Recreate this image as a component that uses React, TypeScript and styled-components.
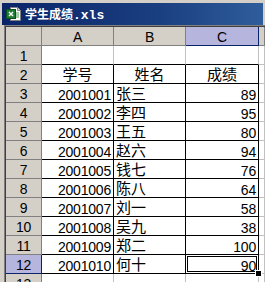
import React from "react";
import styled, { createGlobalStyle } from "styled-components";

const Global = createGlobalStyle`
  html, body { margin: 0; padding: 0; background: #d4d0c8; }
  #root { width: 265px; height: 282px; }
`;

const NAVY = "#0a246a";
const SELBG = "#b5b5de";
const HEADBG = "#d4d0c8";
const HEADLINE = "#808080";
const GRID = "#c0c0c0";

const Window = styled.div`
  width: 265px;
  height: 282px;
  overflow: hidden;
  background: #d4d0c8;
  display: flex;
  flex-direction: column;
`;

const TitleBar = styled.div`
  flex: none;
  margin: 3px 2px 0 2px;
  height: 22px;
  background: linear-gradient(to right, #0a246a 0%, #1a3f80 60%, #2f5d9b 100%);
  display: flex;
  align-items: center;
  gap: 3px;
  padding-left: 4px;
  color: #fff;
`;

const TitleHan = styled.span`
  font-family: "Noto Sans CJK SC", sans-serif;
  font-weight: 700;
  font-size: 12px;
  line-height: 14px;
`;

const TitleExt = styled.span`
  font-family: "Liberation Mono", monospace;
  font-weight: 700;
  font-size: 13px;
  line-height: 14px;
`;

const Frame = styled.div`
  flex: 1;
  margin-left: 4px;
  border-top: 1px solid #808080;
  border-left: 1px solid #808080;
  display: flex;
`;

const Sheet = styled.div`
  flex: 1;
  border-top: 1px solid #404040;
  border-left: 1px solid #404040;
  display: grid;
  grid-template-columns: 36px 72px 72px 73px 1fr;
  grid-auto-rows: 19px;
  background: #fff;
  align-content: start;
`;

const Head = styled.div<{ $sel?: boolean; $row?: boolean }>`
  box-sizing: border-box;
  background: ${(p) => (p.$sel ? SELBG : HEADBG)};
  border-right: 1px solid ${(p) => (p.$sel ? NAVY : HEADLINE)};
  border-bottom: 1px solid ${(p) => (p.$sel ? NAVY : HEADLINE)};
  display: flex;
  align-items: flex-end;
  justify-content: center;
  padding-bottom: 1px;
  overflow: hidden;
`;

const Cell = styled.div<{ $align?: "left" | "right" | "center"; $r?: string; $b?: string; $active?: boolean }>`
  position: relative;
  box-sizing: border-box;
  border-right: 1px solid ${(p) => p.$r || GRID};
  border-bottom: 1px solid ${(p) => p.$b || GRID};
  display: flex;
  align-items: flex-end;
  justify-content: ${(p) =>
    p.$align === "right" ? "flex-end" : p.$align === "center" ? "center" : "flex-start"};
  padding: 0 2px 0 2px;
  box-shadow: ${(p) => (p.$active ? "inset 0 0 0 1px #fff, inset 0 0 0 2px #000" : "none")};
`;

const Num = styled.span`
  font-family: "Liberation Sans", Arial, sans-serif;
  font-size: 14px;
  letter-spacing: -0.2px;
  line-height: 12px;
  padding-bottom: 1px;
  color: #000;
`;

const Han = styled.span`
  font-family: "Noto Sans CJK SC", sans-serif;
  font-size: 15px;
  line-height: 18px;
  color: #000;
`;

const Handle = styled.div`
  position: absolute;
  right: -3px;
  bottom: -3px;
  width: 5px;
  height: 5px;
  background: #000;
  box-shadow: 0 0 0 1px #fff;
  z-index: 2;
`;

const ExcelIcon = () => (
  <svg width="16" height="16" viewBox="0 0 16 16">
    <path d="M4.5 1.5h7l3 3v10h-10z" fill="#fff" stroke="#808080" />
    <path d="M11.5 1.5v3h3" fill="#dcdcdc" stroke="#808080" />
    <path d="M10 7h3M10 9h3M10 11h3" stroke="#4a9a4a" />
    <rect x="0.5" y="3.5" width="9" height="9" fill="#1f7d36" stroke="#0c4d1c" />
    <path d="M3 6l4 4M7 6l-4 4" stroke="#fff" strokeWidth="1.4" />
  </svg>
);

const data: [string, string, string][] = [
  ["2001001", "张三", "89"],
  ["2001002", "李四", "95"],
  ["2001003", "王五", "80"],
  ["2001004", "赵六", "94"],
  ["2001005", "钱七", "76"],
  ["2001006", "陈八", "64"],
  ["2001007", "刘一", "58"],
  ["2001008", "吴九", "38"],
  ["2001009", "郑二", "100"],
  ["2001010", "何十", "90"],
];

export default function App() {
  return (
    <>
      <Global />
      <Window>
        <TitleBar>
          <ExcelIcon />
          <span>
            <TitleHan>学生成绩</TitleHan>
            <TitleExt>.xls</TitleExt>
          </span>
        </TitleBar>
        <Frame>
          <Sheet>
            <Head />
            <Head><Num>A</Num></Head>
            <Head><Num>B</Num></Head>
            <Head $sel><Num>C</Num></Head>
            <Head />

            <Head $row><Num>1</Num></Head>
            <Cell $b="#000" />
            <Cell $b="#000" />
            <Cell $b="#000" />
            <Cell />

            <Head $row><Num>2</Num></Head>
            <Cell $align="center" $r="#000" $b="#000"><Han>学号</Han></Cell>
            <Cell $align="center" $r="#000" $b="#000"><Han>姓名</Han></Cell>
            <Cell $align="center" $r="#000" $b="#000"><Han>成绩</Han></Cell>
            <Cell />

            {data.map(([id, name, score], i) => {
              const rowNo = i + 3;
              const active = rowNo === 12;
              return (
                <React.Fragment key={id}>
                  <Head $row $sel={active}><Num>{rowNo}</Num></Head>
                  <Cell $align="right" $r="#000" $b="#000"><Num>{id}</Num></Cell>
                  <Cell $align="left" $r="#000" $b="#000"><Han>{name}</Han></Cell>
                  <Cell $align="right" $r="#000" $b="#000" $active={active}>
                    <Num>{score}</Num>
                    {active && <Handle />}
                  </Cell>
                  <Cell />
                </React.Fragment>
              );
            })}

            <Head $row><Num>13</Num></Head>
            <Cell />
            <Cell />
            <Cell />
            <Cell />
          </Sheet>
        </Frame>
      </Window>
    </>
  );
}
